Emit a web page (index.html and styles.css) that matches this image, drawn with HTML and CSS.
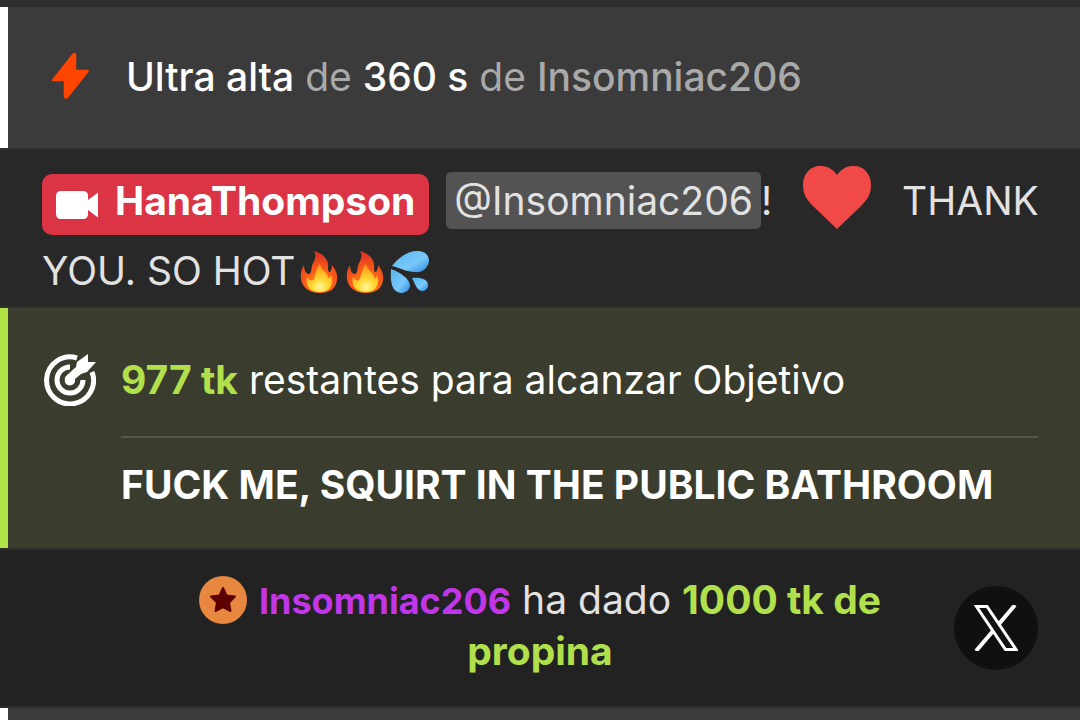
FILE: index.html
```
<!DOCTYPE html>
<html lang="es">
<head>
    <meta charset="UTF-8">
    <meta name="viewport" content="width=device-width, initial-scale=1.0">
    <title>Chat</title>
    <link rel="stylesheet" href="styles.css">
</head>
<body>

<main class="chat">
    <div class="message device">
        <svg class="bolt" viewBox="0 0 38 46" aria-hidden="true">
            <path d="M21.500 1.500 L2 26 Q1 28 3 28 L13 28 L13 43 Q14 46 17 44 L36.500 19.500 Q38 17 35.500 17 L25 17 L25 2 Q23.500 -.5 21.500 1.500Z" fill="#ff4500"/>
        </svg>
        <p><strong>Ultra alta</strong> de <strong>360 s</strong> de <b>Insomniac206</b></p>
    </div>

    <div class="message public">
        <a class="model" href="#"><svg class="camera" viewBox="0 0 44 28" aria-hidden="true">
            <path d="M5 0H27Q32 0 32 5V9L42 1.500V26.500L32 19V23Q32 28 27 28H5Q0 28 0 23V5Q0 0 5 0Z" fill="#fff"/>
        </svg>HanaThompson</a>
        <a class="mention" href="#">@Insomniac206</a>!
        <svg class="heart" viewBox="0 0 68 63" role="img" aria-label="heart">
            <path d="M34 9C28 1 23 0 17 0C7 0 0 8 0 19C0 29 4 34 11 41L34 63L57 41C64 34 68 29 68 19C68 8 61 0 51 0C45 0 40 1 34 9Z" fill="#f14848"/>
        </svg>
        THANK YOU. SO HOT<svg class="emoji" viewBox="0 0 46 46" aria-hidden="true">
            <defs>
                <radialGradient id="flame" gradientUnits="userSpaceOnUse" cx="24" cy="35" r="30">
                    <stop offset="0" stop-color="#ff9d16"/>
                    <stop offset=".45" stop-color="#fa6119"/>
                    <stop offset="1" stop-color="#df3420"/>
                </radialGradient>
                <radialGradient id="core" gradientUnits="userSpaceOnUse" cx="24" cy="38" r="20">
                    <stop offset="0" stop-color="#fff59a"/>
                    <stop offset=".4" stop-color="#ffd935"/>
                    <stop offset="1" stop-color="#ff9d16"/>
                </radialGradient>
                <linearGradient id="water" x1="0" y1="0" x2="1" y2="1">
                    <stop offset="0" stop-color="#55b5ef"/>
                    <stop offset=".6" stop-color="#79c8fa"/>
                    <stop offset="1" stop-color="#2d88df"/>
                </linearGradient>
            </defs>
            <g id="fire">
                <path d="M18 2C29 5 33 12 32 19C32 23 34 25 35 21C36 19 36 17 36 16C40 21 42 26 41 31C40 40 33 44 24 44C13 44 6 38 5 30C4 24 6 19 8 16C8 21 10 25 13 25C16 24 15 18 17 14C20 9 20 5 18 2Z" fill="url(#flame)"/>
                <path d="M24 15C25 22 32 23 32 29C34 29 35 27 35 26C38 34 35 43 24 43C13 43 9 36 11 28C13 31 16 33 18 30C20 25 20 19 24 15Z" fill="url(#core)"/>
            </g>
        </svg><svg class="emoji" viewBox="0 0 46 46" aria-hidden="true">
            <use href="#fire"/>
        </svg><svg class="emoji" viewBox="0 0 46 46" aria-hidden="true">
            <path d="M4 17C11 8 20 2 29 2C37 1 41 7 41 12C40 20 33 24 27 23C19 23 12 19 4 17Z" fill="url(#water)"/>
            <path d="M3 20C13 24 22 30 22 37C21 42 17 44 13 44C4 43 2 34 3 20Z" fill="url(#water)"/>
            <path d="M24 29C32 28 40 30 40 36C40 40 37 42 34 42C28 41 27 34 24 29Z" fill="url(#water)"/>
        </svg>
    </div>

    <div class="message goal">
        <svg class="target" viewBox="0 0 52 52" fill="none" aria-hidden="true">
            <path d="M33 4A23.500 23.500 0 1 0 48 18" stroke="#fff" stroke-width="5"/>
            <path d="M26 13A13 13 0 1 0 39 26" stroke="#fff" stroke-width="5"/>
            <path d="M22 22L32 13L33 8L44 0V8H52L43 18L37 20L31 25C32 33 22 33 21 28Q20 24 22 22Z" fill="#fff"/>
        </svg>
        <div class="goal-info">
            <p class="goal-left"><b>977 tk</b> restantes para alcanzar Objetivo</p>
            <p class="goal-title">FUCK ME, SQUIRT IN THE PUBLIC BATHROOM</p>
        </div>
    </div>

    <div class="message tip">
        <p>
            <svg class="league" viewBox="0 0 48 48" aria-hidden="true">
                <circle cx="24" cy="24" r="24" fill="#e88740"/>
                <path d="M24 12L27.500 19.500L36 20.500L30 26.500L31.500 35L24 31L16.500 35L18 26.500L12 20.500L20.500 19.500Z" fill="#5c0002" stroke="#5c0002" stroke-width="2" stroke-linejoin="round"/>
            </svg>
            <a class="user" href="#">Insomniac206</a> ha dado <b>1000 tk de propina</b>
        </p>
        <button class="share" type="button" aria-label="X">
            <svg viewBox="0 0 44 46" fill="none" stroke="#fff" aria-hidden="true">
                <path d="M2.500 1.500H13L42 44.500H31.500Z" stroke-width="3"/>
                <path d="M41 0L24.500 19.500M19 26L2 46" stroke-width="4"/>
            </svg>
        </button>
    </div>

    <div class="message device"></div>
</main>

</body>
</html>
```
FILE: styles.css
```
* {
    box-sizing: border-box;
}
body {
    margin: 0;
    background-color: #2e2e2e;
    color: #e2e2e2;
    font-family: Inter, "Liberation Sans", sans-serif;
    font-size: 39px;
    line-height: 51px;
}
p {
    margin: 0;
}
a {
    color: inherit;
    text-decoration: none;
}
.chat {
    display: flex;
    flex-direction: column;
    gap: 2px;
    height: 100vh;
    padding-top: 7px;
    overflow: hidden;
}
.message {
    flex-shrink: 0;
    padding: 0 42px;
}

/* toy activity */
.device {
    display: flex;
    align-items: center;
    gap: 36px;
    min-height: 141px;
    padding-bottom: 3px;
    border-left: 8px solid #fff;
    background-color: #3b3b3b;
    color: #a9a9a9;
}
.device strong {
    color: #fff;
    font-weight: 500;
}
.device b {
    font-weight: 500;
}
.bolt {
    width: 40px;
    height: 48px;
}

/* chat message */
.public {
    padding: 16px 32px 0 42px;
    background-color: #282828;
    line-height: 70px;
}
.model {
    display: inline-block;
    margin-right: 6px;
    padding: 0 14px 8px;
    border-radius: 10px;
    background-color: #db3545;
    color: #fff;
    font-weight: 700;
    line-height: 53px;
}
.camera {
    width: 44px;
    height: 28px;
    margin-right: 15px;
    vertical-align: -4px;
}
.mention {
    padding: 5px 8px;
    border-radius: 5px;
    background-color: #535353;
}
.heart {
    width: 68px;
    height: 63px;
    margin: 0 20px;
    vertical-align: -14px;
}
.emoji {
    width: 46px;
    height: 46px;
    vertical-align: -10px;
}

/* goal */
.goal {
    display: flex;
    gap: 25px;
    padding: 46px 42px 38px 36px;
    border-left: 8px solid #afe346;
    background-color: #3a3d2e;
    color: #fff;
}
.target {
    flex-shrink: 0;
    width: 52px;
    height: 52px;
}
.goal-info {
    flex: 1;
}
.goal-left {
    padding-bottom: 31px;
    border-bottom: 2px solid #55584b;
}
.goal b,
.tip b {
    color: #b1e04c;
    font-weight: 700;
}
.goal-title {
    padding-top: 21px;
    font-weight: 700;
}

/* tip */
.tip {
    position: relative;
    padding: 24px 140px 30px;
    background-color: #222;
    text-align: center;
}
.league {
    width: 48px;
    height: 48px;
    margin-right: 1px;
    vertical-align: -10px;
}
.user {
    color: #c136e8;
    font-size: 36px;
    font-weight: 700;
    line-height: 40px;
}
.share {
    position: absolute;
    top: 36px;
    right: 42px;
    display: flex;
    align-items: center;
    justify-content: center;
    width: 84px;
    height: 84px;
    padding: 0;
    border: 0;
    border-radius: 50%;
    background-color: #101010;
}
.share svg {
    width: 44px;
    height: 46px;
}
```
